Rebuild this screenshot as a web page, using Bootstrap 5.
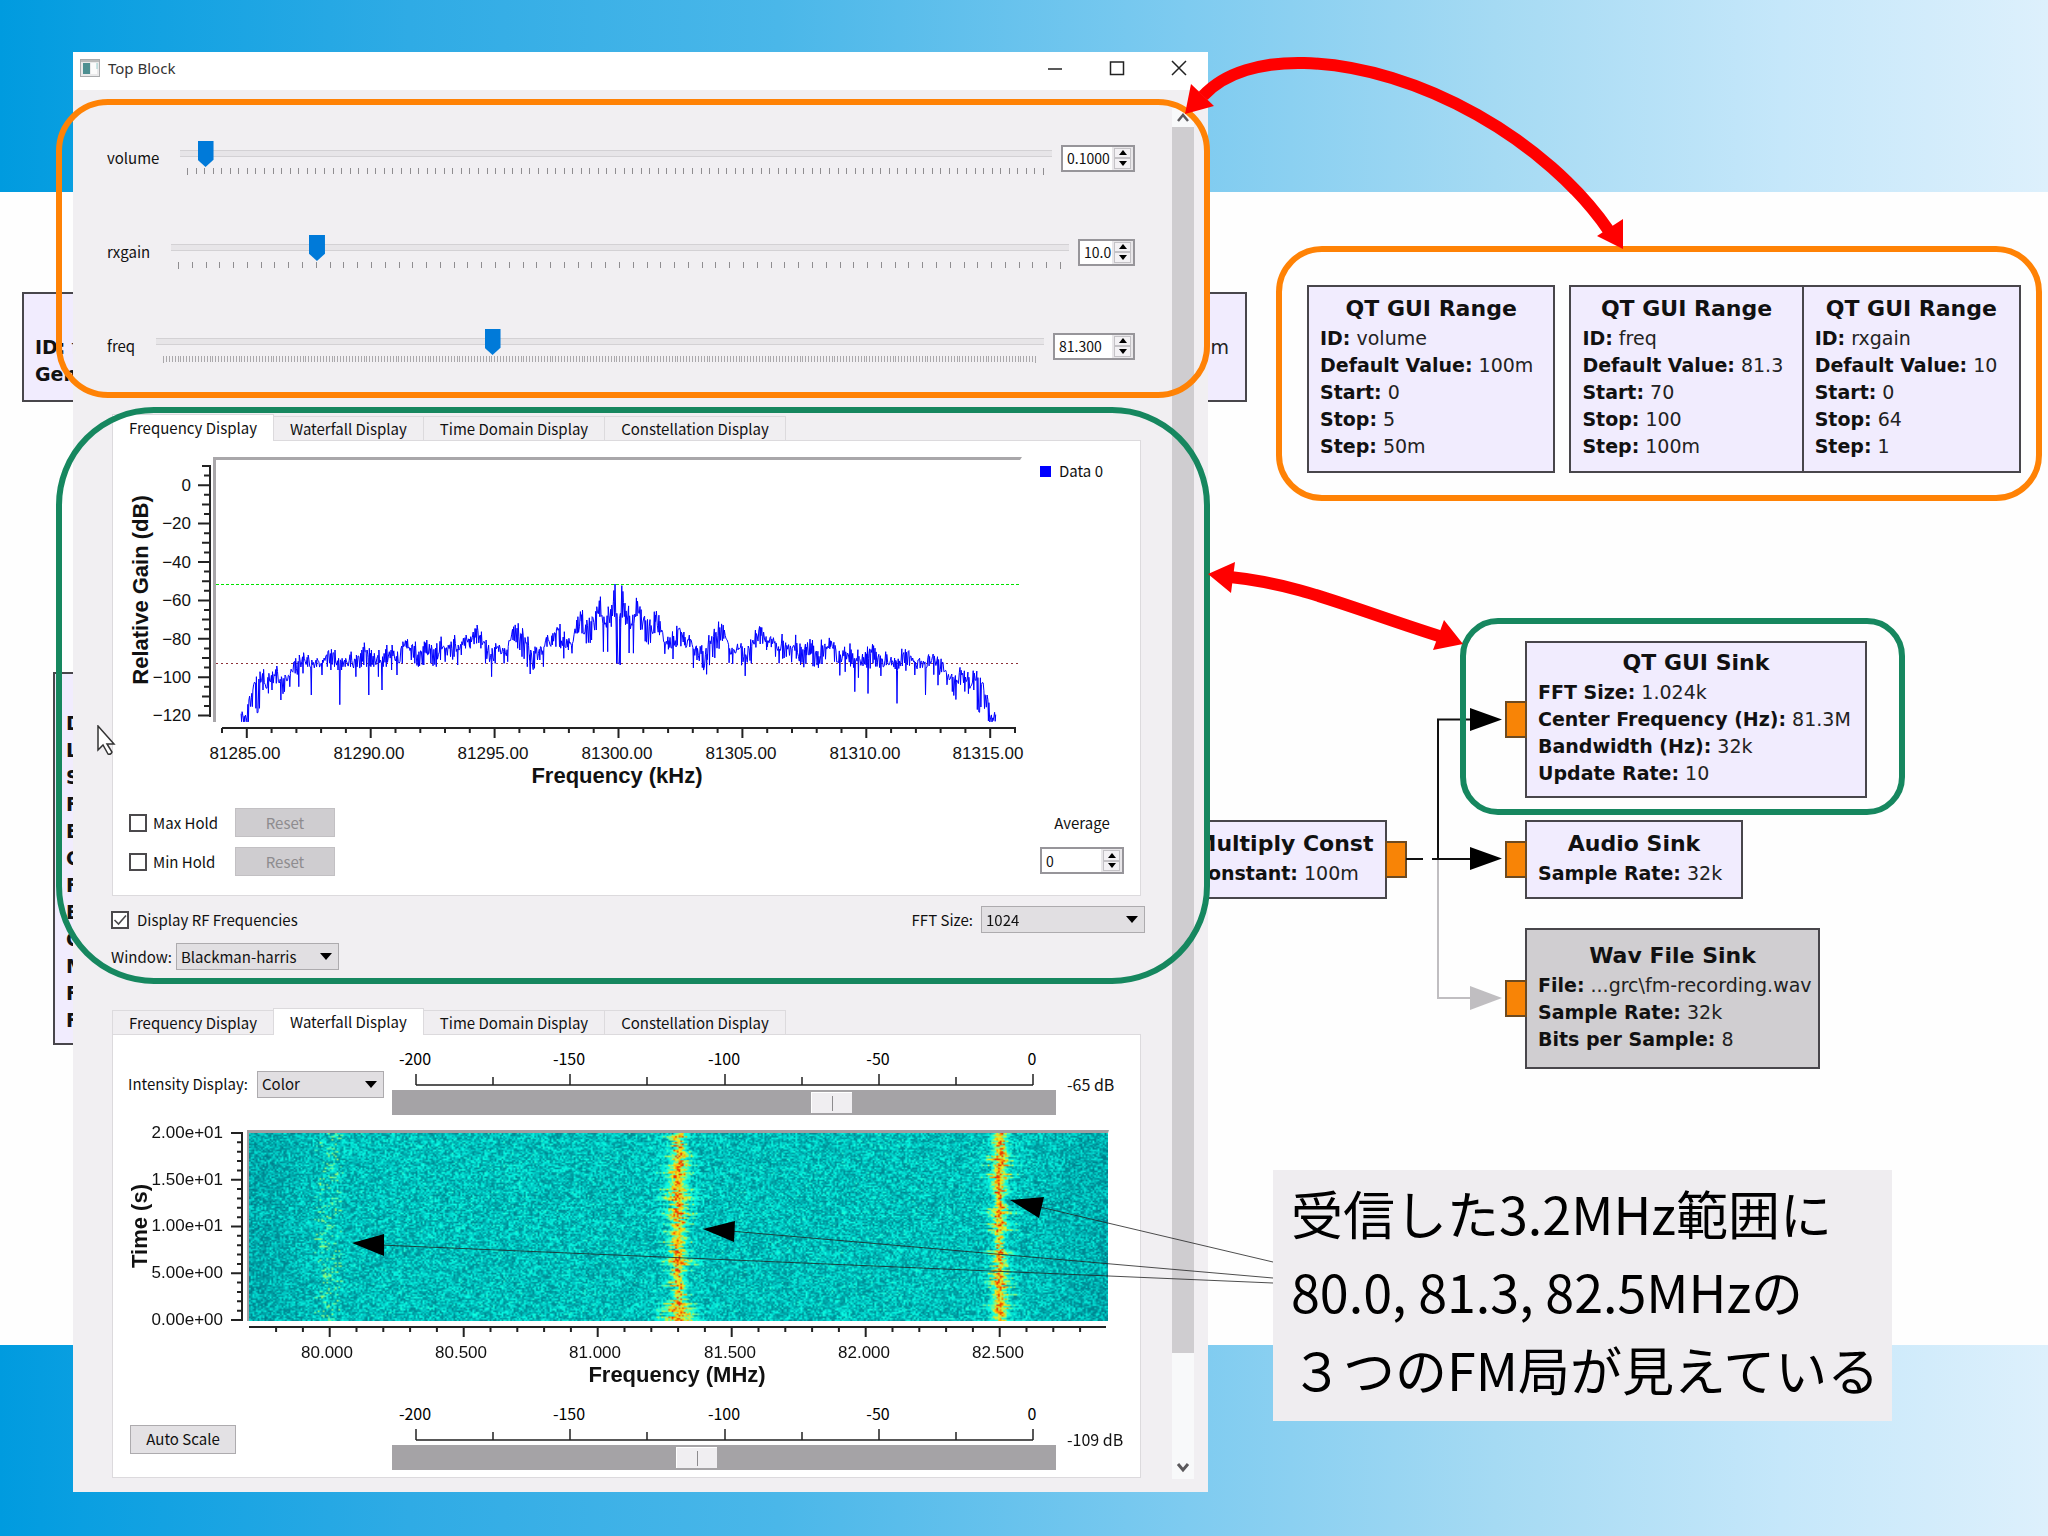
<!DOCTYPE html>
<html lang="ja">
<head>
<meta charset="utf-8">
<meta name="viewport" content="width=device-width, initial-scale=1">
<title>Top Block</title>
<link href="https://cdn.jsdelivr.net/npm/bootstrap@5.3.0/dist/css/bootstrap.min.css" rel="stylesheet">
<style>
:root{--ui:"Noto Sans CJK JP","Noto Sans",sans-serif;--plot:"Liberation Sans",Arial,sans-serif;--node:"DejaVu Sans",sans-serif}
body{margin:0;background:#fefefe;color:#111;font-family:var(--ui);font-size:15px;line-height:20px}
.slide{min-height:100vh;padding:52px 840px 44px 73px;overflow:hidden;
 --sky:linear-gradient(to right,#009bdf 0,#0a9fe1 4%,#2fabe5 20%,#4ab7e9 38%,#7ecbf0 58%,#a5daf3 73%,#c5e7fa 87%,#ddf0fc 100%);
 background-image:var(--sky),var(--sky);background-size:100% 192px,100% 191px;background-position:0 0,0 100%;background-repeat:no-repeat}
/* application window */
.app-win{background:#f1eff2;z-index:2;height:1440px}
.titlebar{background:#fff;height:38px;padding:0 13px 6px 7px;font-family:"Noto Sans",sans-serif;color:#333}
.titlebar button{border:0;background:none;padding:0;width:32px;height:32px;line-height:0}
.win-ops{gap:30px}
.scroller{width:22px;margin:18px 14px 13px 0}
.scroll-thumb{background:#cfcdd0;height:1226px}
.sliders{padding:21px 37px 0 34px}
.ctl-row{height:94px;gap:21px}
.ctl-row .slide-box{margin-right:-12px}
.slide-box{height:34px}
.slide-box svg{height:8px;width:100%;display:block}
.pin{appearance:none;-webkit-appearance:none;background:none;width:100%;height:26px;margin:0;display:block}
.pin::-webkit-slider-runnable-track{height:26px;background:linear-gradient(#d3d1d4,#d3d1d4) 0 9px/100% 1px no-repeat,linear-gradient(#d3d1d4,#d3d1d4) 0 15px/100% 1px no-repeat,linear-gradient(#e7e5e8,#e7e5e8) 0 10px/100% 5px no-repeat}
.pin::-webkit-slider-thumb{-webkit-appearance:none;width:16px;height:26px;background:#007ad9;clip-path:polygon(0 0,100% 0,100% 72%,50% 100%,0 72%)}
.spin{border:2px solid #97959a;background:#fff;height:27px}
.spin input{border:0;outline:0;background:none;min-width:0;width:100%;font:14px/20px var(--ui);padding:0 0 0 4px;color:#111}
.spin-btns{width:21px;flex:none;background:#e9e7ea;padding:1px 2px}
.spin-btns button{flex:1;border:1px solid #c4c2c6;background:#f3f1f4;padding:0;line-height:0;display:flex;align-items:center;justify-content:center}
.w-vol{width:74px}.w-rx{width:57px}.w-frq{width:82px}.w-avg{width:84px}
.tab-wrap{margin:21px 31px 0 39px}
.tab-wrap.lower{margin-top:38px}
.tabs{height:26px}
.tabs button{border:1px solid #dcdadd;border-bottom:0;margin-right:-1px;background:#f0eef1;height:24px;padding:0 16px;font-size:15px;line-height:22px;color:#111;white-space:nowrap}
.tabs button.on{background:#fff;height:27px;margin-bottom:-1px;position:relative;z-index:1}
.pane{background:#fff;border:1px solid #dcdadd}
.pane.falls{padding:18px 0 7px}
.pane svg.plot{width:100%;height:auto;display:block}
.holds{padding:10px 16px 19px}
.holds .btn-reset{width:100px;height:29px;border:1px solid #c2c0c3;background:#cfcdd0;color:#8e8c8f;padding:0}
.holds .holdrow{height:29px}
.holds .holdrow+.holdrow,.holds .spin{margin-top:10px}
.tick{appearance:none;-webkit-appearance:none;width:18px;height:18px;border:2px solid #4b494c;background:#fff;margin:0;flex:none}
.tick-wrap{position:relative;height:18px}
.tick-wrap svg{position:absolute;left:2px;top:2px;pointer-events:none}
.holdlabel{width:82px;margin-left:6px}
.opts{margin:10px 27px 0 38px}
.drop{position:relative}
.drop select{appearance:none;-webkit-appearance:none;border:1px solid #adabae;border-radius:0;background:#e1dfe2;height:27px;font:15px/20px var(--ui);color:#111;padding:0 4px;width:100%;display:block}
.drop svg{position:absolute;right:7px;top:10px;pointer-events:none}
.w-fft{width:164px}.w-win{width:163px}.w-col{width:127px}
.level{padding-left:15px;height:62px}
.level .side{width:256px}
.level .scalebox{margin-left:8px}
.level .db{width:84px;padding-left:11px;font-size:16px;white-space:nowrap}
.scalebox svg{display:block;width:100%;height:37px;overflow:visible;font:16px var(--ui)}
.bar{appearance:none;-webkit-appearance:none;width:100%;height:25px;margin:0;display:block;background:#a5a3a6;border:3px solid #a5a3a6;border-top-width:2px;border-bottom-width:2px}
.bar::-webkit-slider-thumb{-webkit-appearance:none;width:41px;height:21px;background:linear-gradient(#8d8b8e,#8d8b8e) 20px 3px/1px 15px no-repeat,#f0eef1;border-left:1px solid #fff;border-top:1px solid #fff}
.btn-auto{width:106px;height:29px;border:1px solid #adabae;background:#e3e1e4;padding:0;margin-left:2px}
button{color:#111}
/* flow-graph blocks */
.blk{border:2px solid #48464b;background:#f1ecfe;font:19px/27px var(--node);color:#222;padding:6px 0 10px 11px;white-space:nowrap;overflow:visible}
.blk h2{font:bold 22px/32px var(--node);text-align:center;margin:0 11px 0 0;color:#111}
.blk b{color:#111}
.blk p{margin:0}
.free{position:absolute}
.blk .port{position:absolute;width:22px;height:37px;background:#f88406;border:2px solid #6d4a20}
.port.in{left:-22px}.port.out{right:-22px}
.ranges{right:6px;top:246px;width:766px;height:255px;border:6px solid #ff8205;border-radius:46px;padding:33px 15px 0 25px;z-index:3}
.ranges .blk{height:188px}
.rg-a{flex:249 0 0;margin-right:14px}.rg-b{flex:234 0 0;margin-right:-2px}.rg-c{flex:218 0 0}
.n-sink{right:181px;top:641px;width:342px;height:157px;padding-top:4px}
.n-audio{right:305px;top:820px;width:218px;height:79px}
.n-wav{right:228px;top:928px;width:295px;height:141px;background:#d0ced1;padding-top:10px}
.n-mul{right:661px;top:820px;width:206px;height:79px}
.n-sink .port{top:58px}.n-audio .port,.n-mul .port{top:19px}.n-wav .port{top:50px}
.n-left{left:22px;right:801px;top:292px;height:110px;padding-top:40px}
.n-tall{left:53px;width:300px;top:672px;height:373px;padding-top:36px}
/* highlight outlines */
.hl{position:absolute;border:6px solid;pointer-events:none;z-index:4}
.hl-or{left:56px;right:838px;top:99px;height:299px;border-color:#ff8205;border-radius:52px}
.hl-gr{left:56px;right:838px;top:407px;height:577px;border-color:#16875f;border-radius:98px}
.hl-sm{right:143px;top:618px;width:445px;height:197px;border-color:#16875f;border-radius:38px}
.links{position:absolute;right:0;top:0;z-index:5;pointer-events:none}
.links.under{z-index:1}
.note-box{right:156px;top:1170px;width:619px;height:251px;background:#efedf0;z-index:6;padding:4px 0 0 18px;font:400 52px/78px "Noto Sans CJK JP",sans-serif;color:#000;white-space:nowrap}
.note-box p{margin:0}
.cursor{left:97px;top:725px;z-index:4}
</style>
<script src="https://cdn.jsdelivr.net/npm/bootstrap@5.3.0/dist/js/bootstrap.bundle.min.js"></script>
</head>
<body>
<main class="slide position-relative">

 <section class="blk free n-left d-flex justify-content-between" aria-label="Options">
  <div><p><b>ID:</b> f</p><p><b>Gen</b></p></div><p class="pe-3">m</p>
 </section>
 <section class="blk free n-tall" aria-label="Source">
  <p><b>D</b></p><p><b>L</b></p><p><b>S</b></p><p><b>F</b></p><p><b>E</b></p><p><b>C</b></p><p><b>F</b></p><p><b>E</b></p><p><b>C</b></p><p><b>M</b></p><p><b>F</b></p><p><b>F</b></p>
 </section>
 <section class="blk free n-mul"><h2>Multiply Const</h2><p><b>Constant:</b> 100m</p><span class="port out"></span></section>

 <div class="app-win position-relative d-flex flex-column">
  <header class="titlebar d-flex align-items-center justify-content-between">
   <div class="d-flex align-items-center gap-2">
    <svg width="20" height="18" viewBox="0 0 20 18"><rect x=".5" y=".5" width="19" height="17" fill="#e9e9ea" stroke="#a9abad"/><path d="M1 2h18" stroke="#bbb" stroke-width="2"/><rect x="3" y="4" width="7" height="11" fill="#4d8f91"/><rect x="11" y="4" width="6" height="11" fill="#fbfbfb"/><path d="M17 4v6" stroke="#9cc" /></svg>
    <span>Top Block</span>
   </div>
   <div class="win-ops d-flex">
    <button type="button" aria-label="Minimize"><svg width="16" height="16"><path d="M1 9h14" stroke="#222" stroke-width="1.5"/></svg></button>
    <button type="button" aria-label="Maximize"><svg width="16" height="16"><rect x="1.500" y="2" width="13" height="12.500" fill="none" stroke="#222" stroke-width="1.500"/></svg></button>
    <button type="button" aria-label="Close"><svg width="16" height="16"><path d="M1 1l14 14M15 1L1 15" stroke="#222" stroke-width="1.500"/></svg></button>
   </div>
  </header>

  <div class="d-flex flex-grow-1">
   <div class="flex-grow-1">
    <div class="sliders">
     <div class="ctl-row d-flex align-items-center"><label for="vol">volume</label>
      <div class="slide-box flex-grow-1"><input class="pin" type="range" id="vol" min="0" max="5" step="0.05" value="0.1"><svg data-n="100"></svg></div>
      <div class="spin w-vol d-flex"><input type="text" value="0.1000" aria-label="volume value"><div class="spin-btns d-flex flex-column"></div></div></div>
     <div class="ctl-row d-flex align-items-center"><label for="rxg">rxgain</label>
      <div class="slide-box flex-grow-1"><input class="pin" type="range" id="rxg" min="0" max="64" step="1" value="10"><svg data-n="64"></svg></div>
      <div class="spin w-rx d-flex"><input type="text" value="10.0" aria-label="rxgain value"><div class="spin-btns d-flex flex-column"></div></div></div>
     <div class="ctl-row d-flex align-items-center"><label for="frq">freq</label>
      <div class="slide-box flex-grow-1"><input class="pin" type="range" id="frq" min="70" max="100" step="0.1" value="81.3"><svg data-n="300"></svg></div>
      <div class="spin w-frq d-flex"><input type="text" value="81.300" aria-label="freq value"><div class="spin-btns d-flex flex-column"></div></div></div>
    </div>

    <div class="tab-wrap">
     <div class="tabs d-flex align-items-end" role="tablist"><button type="button" class="on">Frequency Display</button><button type="button">Waterfall Display</button><button type="button">Time Domain Display</button><button type="button">Constellation Display</button></div>
     <div class="pane">
      <svg class="plot" id="fft" viewBox="113 441 1027 357" font-family="Liberation Sans, Arial, sans-serif" font-size="17" fill="#111"></svg>
      <div class="holds d-flex justify-content-between">
       <div>
        <div class="holdrow d-flex align-items-center"><input class="tick" type="checkbox" id="mx"><label class="holdlabel" for="mx">Max Hold</label><button type="button" class="btn-reset" disabled>Reset</button></div>
        <div class="holdrow d-flex align-items-center"><input class="tick" type="checkbox" id="mn"><label class="holdlabel" for="mn">Min Hold</label><button type="button" class="btn-reset" disabled>Reset</button></div>
       </div>
       <div class="w-avg">
        <div class="holdrow d-flex align-items-center justify-content-center"><label for="avg">Average</label></div>
        <div class="spin d-flex"><input type="text" id="avg" value="0"><div class="spin-btns d-flex flex-column"></div></div>
       </div>
      </div>
     </div>
    </div>
    <div class="opts d-flex justify-content-between align-items-center">
     <div class="d-flex align-items-center"><span class="tick-wrap"><input class="tick d-block" type="checkbox" id="rf" checked><svg width="14" height="14"><path d="M1.500 7l4 4L13 2.500" fill="none" stroke="#4b494c" stroke-width="1.600"/></svg></span><label for="rf" class="ms-2">Display RF Frequencies</label></div>
     <div class="d-flex align-items-center gap-2"><label for="fs">FFT Size:</label><div class="drop w-fft"><select id="fs"><option>1024</option></select><svg width="12" height="7"><path d="M0 0h12L6 7z"/></svg></div></div>
    </div>
    <div class="opts d-flex align-items-center gap-1"><label for="wd">Window:</label><div class="drop w-win"><select id="wd"><option>Blackman-harris</option></select><svg width="12" height="7"><path d="M0 0h12L6 7z"/></svg></div></div>

    <div class="tab-wrap lower">
     <div class="tabs d-flex align-items-end" role="tablist"><button type="button">Frequency Display</button><button type="button" class="on">Waterfall Display</button><button type="button">Time Domain Display</button><button type="button">Constellation Display</button></div>
     <div class="pane falls">
      <div class="level d-flex align-items-center">
       <div class="side d-flex align-items-center justify-content-between"><label for="ci">Intensity Display:</label><div class="drop w-col"><select id="ci"><option>Color</option></select><svg width="12" height="7"><path d="M0 0h12L6 7z"/></svg></div></div>
       <div class="scalebox flex-grow-1"><svg class="scale" viewBox="0 0 664 37"></svg><input class="bar" type="range" min="-200" max="0" value="-65" aria-label="Upper level"></div>
       <div class="db">-65 dB</div>
      </div>
      <svg class="plot" id="wf" viewBox="113 1116 1027 293" font-family="Liberation Sans, Arial, sans-serif" font-size="17" fill="#111">
       <foreignObject x="249" y="1134" width="859" height="188"><canvas id="wfc" width="500" height="125" style="width:859px;height:188px;display:block"></canvas></foreignObject>
      </svg>
      <div class="level d-flex align-items-center">
       <div class="side"><button type="button" class="btn-auto">Auto Scale</button></div>
       <div class="scalebox flex-grow-1"><svg class="scale" viewBox="0 0 664 37"></svg><input class="bar" type="range" min="-200" max="0" value="-109" aria-label="Lower level"></div>
       <div class="db">-109 dB</div>
      </div>
     </div>
    </div>
   </div>
   <div class="scroller d-flex flex-column bg-body-tertiary">
    <svg width="22" height="19"><path d="M6 13l5-6 5 6" fill="none" stroke="#5b595c" stroke-width="2.500"/></svg>
    <div class="scroll-thumb"></div>
    <svg width="22" height="26" class="mt-auto"><path d="M6 11l5 6 5-6" fill="none" stroke="#5b595c" stroke-width="3"/></svg>
   </div>
  </div>
 </div>

 <div class="free ranges d-flex">
  <section class="blk rg-a"><h2>QT GUI Range</h2><p><b>ID:</b> volume</p><p><b>Default Value:</b> 100m</p><p><b>Start:</b> 0</p><p><b>Stop:</b> 5</p><p><b>Step:</b> 50m</p></section>
  <section class="blk rg-b"><h2>QT GUI Range</h2><p><b>ID:</b> freq</p><p><b>Default Value:</b> 81.3</p><p><b>Start:</b> 70</p><p><b>Stop:</b> 100</p><p><b>Step:</b> 100m</p></section>
  <section class="blk rg-c"><h2>QT GUI Range</h2><p><b>ID:</b> rxgain</p><p><b>Default Value:</b> 10</p><p><b>Start:</b> 0</p><p><b>Stop:</b> 64</p><p><b>Step:</b> 1</p></section>
 </div>
 <section class="blk free n-sink"><h2>QT GUI Sink</h2><p><b>FFT Size:</b> 1.024k</p><p><b>Center Frequency (Hz):</b> 81.3M</p><p><b>Bandwidth (Hz):</b> 32k</p><p><b>Update Rate:</b> 10</p><span class="port in"></span></section>
 <section class="blk free n-audio"><h2>Audio Sink</h2><p><b>Sample Rate:</b> 32k</p><span class="port in"></span></section>
 <section class="blk free n-wav"><h2>Wav File Sink</h2><p><b>File:</b> ...grc\fm-recording.wav</p><p><b>Sample Rate:</b> 32k</p><p><b>Bits per Sample:</b> 8</p><span class="port in"></span></section>

 <svg class="links under" width="848" height="1536" viewBox="1200 0 848 1536">
  <g fill="none" stroke-width="2"><path d="M1438 859V998H1472" stroke="#c0bec1"/><path d="M1406 859h17M1432 859h40M1438 859V719.500h34" stroke="#111"/></g>
  <path d="M1470 708l32 11.500-32 11.500zM1470 847l32 11.500-32 11.500z" fill="#000"/><path d="M1470 986l32 12-32 12z" fill="#c0bec1"/>
 </svg>

 <div class="hl hl-or"></div><div class="hl hl-gr"></div><div class="hl hl-sm"></div>

 <svg class="links" width="1748" height="1536" viewBox="300 0 1748 1536">
  <g fill="none" stroke="#f00" stroke-width="12"><path d="M1203 96C1225 72 1262 62 1304 63C1420 66 1548 142 1609 231"/><path d="M1230 577C1300 584 1350 608 1442 637"/></g>
  <g fill="#f00"><path d="M1185 114l6-30 23 22zM1623 249V219l-26 17zM1208 574l27-12-4 31zM1463 644l-19-24-11 30z"/></g>
  <g stroke="#222" stroke-width="1" opacity=".8"><path d="M1273 1283L380 1245M1273 1278L730 1231M1273 1262L1040 1207"/></g>
  <path d="M352 1243l32-9v22zM703 1229l32-8-1 21zM1010 1200l34-3-5 21z"/>
 </svg>
 <svg class="free cursor" width="20" height="32"><path d="M1 1v24l5-5 5 9q3 1 4-2l-5-8h7z" fill="#fff" stroke="#333" stroke-width="1.500"/></svg>

 <aside class="free note-box"><p>受信した3.2MHz範囲に</p><p>80.0, 81.3, 82.5MHzの</p><p>３つのFM局が見えている</p></aside>
</main>

<script>
let seed=7;const rnd=()=>{seed=(seed*1664525+1013904223)>>>0;return seed/4294967296};
// spin buttons
document.querySelectorAll('.spin-btns').forEach(b=>{b.innerHTML='<button type="button" aria-label="Up"><svg width="8" height="5"><path d="M4 0l4 5H0z"/></svg></button><button type="button" aria-label="Down"><svg width="8" height="5"><path d="M0 0h8L4 5z"/></svg></button>'});
// tick marks under the control sliders
document.querySelectorAll('svg[data-n]').forEach(s=>{const n=+s.dataset.n,w=s.clientWidth-16;let h='';
 for(let i=0;i<=n;i++){const x=Math.round(7+w*i/n);h+=`<rect x="${x}" y="1" width="1" height="${i===0||i===n?7:6}" fill="${n>200?'#aaa8ab':'#8f8d90'}"/>`}s.innerHTML=h});
// level scales
document.querySelectorAll('svg.scale').forEach(s=>{let h='<path stroke="#222" stroke-width="1.500" d="M24 32H641';
 for(let i=0;i<9;i++)h+=`M${Math.round(24+i*77.125)} ${i%2?24:21}V32`;h+='"/>';
 [-200,-150,-100,-50,0].forEach((v,i)=>h+=`<text text-anchor="middle" x="${Math.round(23+i*154.25)}" y="12">${v}</text>`);s.innerHTML=h});
// spectrum plot
(()=>{let h='<path d="M213 457H1022L1020 460H216V722H213z" fill="#a9a7aa"/><path stroke="#222" stroke-width="2" fill="none" d="M210 465V717';
 for(let i=0;i<=26;i++){const y=(466+i*9.6).toFixed(1),m=(i-2)%4===0;h+=`M${m?198:(i%2?204:202)} ${y}H210`}
 h+='M222 728H1016';for(let i=-1;i<=31;i++){h+=`M${(246.8+i*24.78).toFixed(1)} 728V${i%5===0?738:733}`}
 h+='"/>';
 for(let i=0;i<7;i++)h+=`<text text-anchor="end" x="191" y="${Math.round(491+i*38.4)}">${i?'−'+20*i:0}</text>`;
 for(let i=0;i<7;i++)h+=`<text text-anchor="middle" x="${Math.round(245+i*123.9)}" y="759">${81285+5*i}.00</text>`;
 h+='<text text-anchor="middle" x="617" y="783" font-size="22" font-weight="bold">Frequency (kHz)</text><text text-anchor="middle" transform="translate(148 590) rotate(-90)" font-size="22" font-weight="bold">Relative Gain (dB)</text>';
 h+='<path stroke="#00e400" stroke-width="1" stroke-dasharray="3 2" d="M216 584.500H1020"/><path stroke="#8c3038" stroke-dasharray="2 3" d="M216 663.500H1020"/>';
 h+='<rect x="1040" y="466" width="11" height="11" fill="#00f"/><text x="1059" y="477" font-size="15" font-family="Noto Sans CJK JP, sans-serif">Data 0</text>';
 const env='395 935 965,404 945 965,414 900 965,425 870 920,435 830 925,445 815 925,455 808 870,470 820 880,480 815 870,492 798 850,505 830 900,515 825 875,530 820 860,545 775 820,555 765 860,567 758 820,580 765 800,590 780 885,605 775 800,620 780 825,635 755 800,645 748 810,655 750 800,665 775 810,670 780 914,675 775 810,685 775 800,700 755 800,715 765 830,730 750 800,737 728 795,745 750 800,751 745 885,757 750 800,765 760 800,778 750 830,788 770 870,800 735 800,815 735 810,830 755 825,845 725 790,858 718 745,870 735 780,880 725 790,890 755 800,905 725 795,912 720 760,925 735 790,940 730 800,952 710 780,965 745 785,980 725 770,990 705 770,1000 735 795,1010 725 765,1022 705 745,1035 710 745,1053 675 730,1065 695 745,1078 720 790,1095 745 830,1105 730 790,1115 735 755,1130 745 790,1140 740 785,1155 680 720,1168 670 745,1180 685 770,1195 710 800,1203 750 822,1215 740 805,1230 740 780,1240 740 800,1250 705 740,1265 700 735,1275 690 740,1285 672 740,1297 695 775,1310 715 750,1320 730 760,1335 650 700,1348 630 700,1360 660 730,1375 650 720,1388 620 690,1398 590 650,1408 650 755,1420 620 755,1430 615 680,1439 552 650,1445 650 790,1450 700 790'.split(',').map(s=>s.split(' ').map(Number));
 const left=[];
 for(let k=0;k<env.length-1;k++){const [x,t,b]=env[k],[x2,t2,b2]=env[k+1];
  left.push([x,t+(b-t)*.2],[x+1.5,b],[x+3,t]);
  for(let q=x+5;q<x2;q+=2.5){const f=(q-x)/(x2-x),T=t+(t2-t)*f,B=Math.min(b,b2);left.push([q,T+(Math.max(B,T+20)-T)*rnd()*1.15])}}
 const right=left.map(([x,y])=>[2903-x,y+(rnd()-.5)*12]).reverse();
 h+='<polyline fill="none" stroke="#00f" stroke-width="1" points="'+left.concat([[1447,640],[1450,790],[1454,790],[1457,640]],right).map(([x,y])=>(x/2.8+100).toFixed(1)+','+Math.min(722,y/3+400).toFixed(1)).join(' ')+'"/>';
 document.getElementById('fft').innerHTML=h})();
// waterfall axes
(()=>{let h='<path d="M247 1131H1109L1108 1134H249V1322H247z" fill="#a19fa2"/><path stroke="#222" stroke-width="2" fill="none" d="M242 1133V1322';
 for(let i=0;i<=20;i++)h+=`M${i%5?237:231} ${(1134+i*9.35).toFixed(1)}H242`;
 h+='M249 1328H1106';for(let i=-2;i<=28;i++)h+=`M${(329.7+i*26.8).toFixed(1)} 1328V${i%5?1333:1338}`;h+='"/>';
 ['2.00e+01','1.50e+01','1.00e+01','5.00e+00','0.00e+00'].forEach((t,i)=>h+=`<text text-anchor="end" x="223" y="${Math.round(1139+i*46.7)}">${t}</text>`);
 ['80.000','80.500','81.000','81.500','82.000','82.500'].forEach((t,i)=>h+=`<text text-anchor="middle" x="${Math.round(327+i*134.2)}" y="1359">${t}</text>`);
 h+='<text text-anchor="middle" x="677" y="1383" font-size="22" font-weight="bold">Frequency (MHz)</text><text text-anchor="middle" transform="translate(147 1227) rotate(-90)" font-size="22" font-weight="bold">Time (s)</text>';
 document.getElementById('wf').insertAdjacentHTML('beforeend',h);
 const c=document.getElementById('wfc'),g=c.getContext('2d'),W=c.width,H=c.height,im=g.createImageData(W,H);
 const stops=[[0,0,120,135],[.25,0,150,156],[.5,0,205,200],[.72,10,255,230],[.8,120,250,140],[.88,240,240,30],[.96,255,160,0],[1,235,50,0]];
 const col=v=>{v=Math.max(0,Math.min(1,v));for(let i=1;i<stops.length;i++)if(v<=stops[i][0]){const a=stops[i-1],b=stops[i],f=(v-a[0])/(b[0]-a[0]);return[1,2,3].map(k=>a[k]+(b[k]-a[k])*f)}};
 let a=4,b=3;
 for(let y=0;y<H;y++){a+=(rnd()-.5)*3;a=Math.max(2.5,Math.min(5,a));b+=(rnd()-.5)*2;b=Math.max(2,Math.min(4,b));
  const j1=rnd()<.25?4:0,j2=rnd()<.18?4:0,off=(rnd()-.5)*4,o3=(rnd()-.5)*12;
  for(let x=0;x<W;x++){let v=.12+.62*rnd();
   const edge=Math.min(x,W-x);v-=Math.max(0,(45-edge)/45)*.12;
   const d1=Math.abs(x-249.5-off),d2=Math.abs(x-436.5-off*.7),w1=a+j1,w2=b+j2;
   if(d1<w1*1.6)v=Math.max(v,.62+.36*(1-d1/(w1*1.6))+(rnd()-.5)*.22);
   if(d2<w2*1.6)v=Math.max(v,.62+.36*(1-d2/(w2*1.6))+(rnd()-.5)*.22);
   const d3=Math.abs(x-46-o3);if(d3<2.5&&rnd()<.4)v=.75+rnd()*.08;
   const p=col(v),i=(y*W+x)*4;im.data[i]=p[0];im.data[i+1]=p[1];im.data[i+2]=p[2];im.data[i+3]=255}}
 g.putImageData(im,0,0)})();
</script>
</body>
</html>
